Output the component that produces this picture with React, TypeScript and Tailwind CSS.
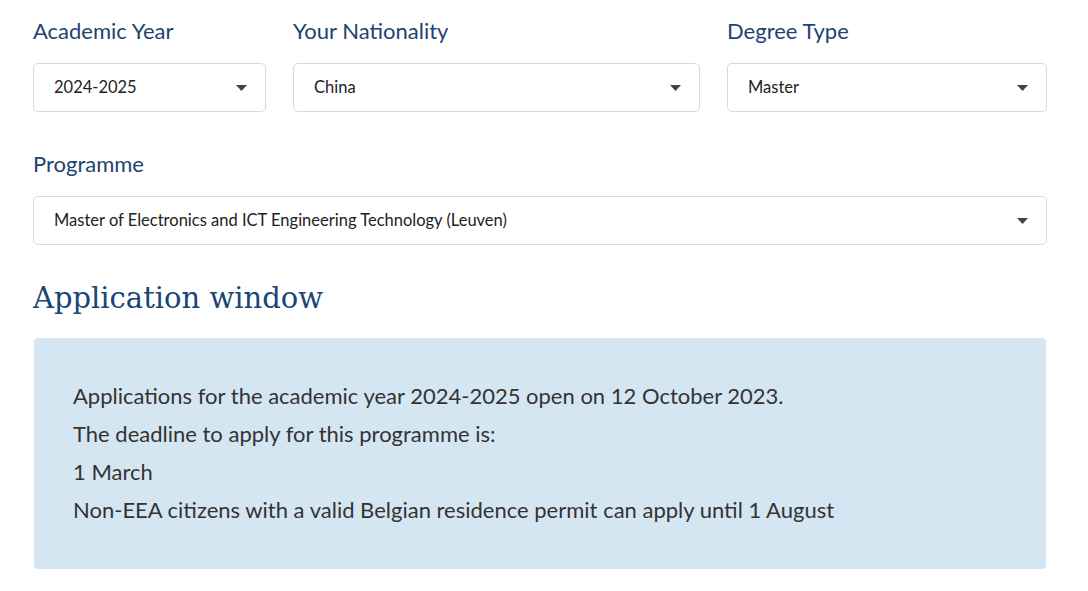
import type { FC } from 'react';

const SANS = 'font-["Lato","Noto_Sans",sans-serif]';

const Caret: FC = () => (
  <svg width="11" height="6" viewBox="0 0 11 6" className="shrink-0">
    <path d="M0 0h11L5.5 6z" fill="#444" />
  </svg>
);

const SelectBox: FC<{ value: string }> = ({ value }) => (
  <div className="flex h-[49px] items-center justify-between rounded-[5px] border border-[#d9d9d9] bg-white pl-[20px] pr-[18px]">
    <span className="text-[16.5px] text-[#222]">{value}</span>
    <Caret />
  </div>
);

const Field: FC<{ label: string; value: string }> = ({ label, value }) => (
  <div className="flex flex-col">
    <label className="mb-[17px] text-[22px] leading-[30px] text-[#1d4470]">{label}</label>
    <SelectBox value={value} />
  </div>
);

const lines = [
  'Applications for the academic year 2024-2025 open on 12 October 2023.',
  'The deadline to apply for this programme is:',
  '1 March',
  'Non-EEA citizens with a valid Belgian residence permit can apply until 1 August',
];

export default function App() {
  return (
    <div className={`min-h-[591px] bg-white ${SANS}`}>
      <div className="w-[1088px] pl-[33px] pr-[41px] pt-[16px]">
        <div className="grid grid-cols-[233px_407px_320px] gap-x-[27px]">
          <Field label="Academic Year" value="2024-2025" />
          <Field label="Your Nationality" value="China" />
          <Field label="Degree Type" value="Master" />
        </div>
        <div className="mt-[37px]">
          <Field label="Programme" value="Master of Electronics and ICT Engineering Technology (Leuven)" />
        </div>
        <h2 className='mt-[33px] font-["DejaVu_Serif",serif] text-[29px] leading-[40px] text-[#174677]'>
          Application window
        </h2>
        <div className="mx-[1px] mt-[20px] rounded-[4px] bg-[#d5e6f3] px-[39px] pt-[39px] pb-[40px]">
          {lines.map((l) => (
            <p key={l} className="text-[22px] leading-[38px] text-[#333]">
              {l}
            </p>
          ))}
        </div>
      </div>
    </div>
  );
}
